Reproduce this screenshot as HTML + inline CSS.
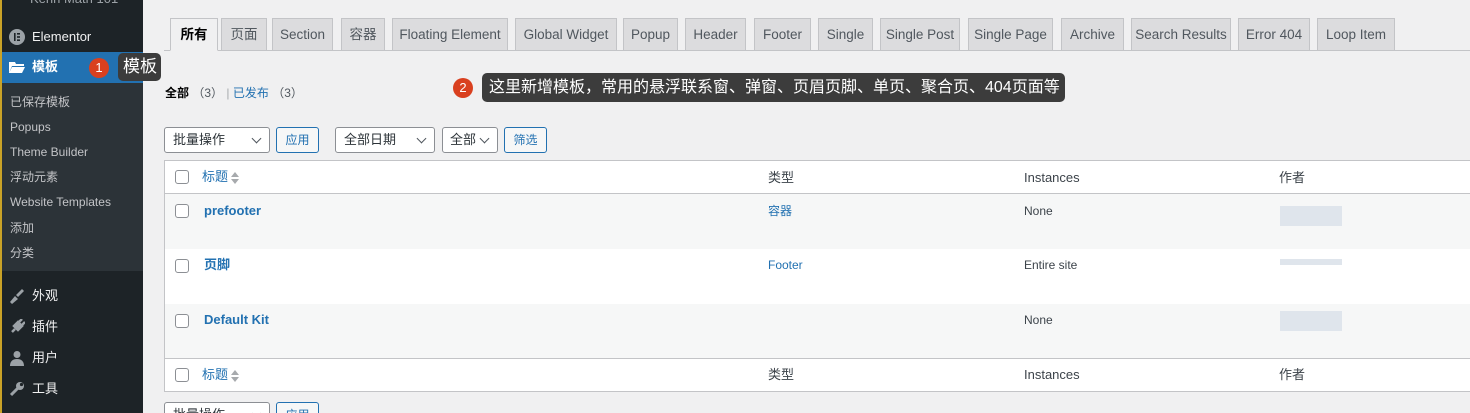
<!DOCTYPE html>
<html><head><meta charset="utf-8"><style>
*{box-sizing:border-box;margin:0;padding:0}
html,body{width:1470px;height:413px;overflow:hidden}
body{background:#f0f0f1;font-family:"Liberation Sans","Noto Sans CJK SC",sans-serif;font-size:13px;color:#3c434a;position:relative}
.sb{position:absolute;left:0;top:0;width:143px;height:413px;background:#1d2327;border-left:2px solid #c9a227}
.sb .it{position:absolute;left:0;width:141px;color:#f0f0f1;font-size:13px;height:30px;line-height:30px;padding-left:30px}
.sb .ic{position:absolute;left:7px;top:7px;width:16px;height:16px}
.sub{position:absolute;left:0;top:83px;width:141px;height:188px;background:#2c3338}
.sub div{position:absolute;left:8px;color:#c3c4c7;font-size:12px;line-height:16px}
.tab{position:absolute;top:18px;height:33px;border:1px solid #c3c4c7;background:#dcdcde;color:#50575e;font-size:13.5px;line-height:32px;text-align:center;white-space:nowrap}
.tab.a{background:#f0f0f1;border-bottom-color:#f0f0f1;color:#000;font-weight:bold}
.line{position:absolute;left:164px;right:0;top:50px;height:1px;background:#c3c4c7}
.sel{position:absolute;top:127px;height:26px;border:1px solid #8c8f94;border-radius:3px;background:#fff;font-size:13px;line-height:24px;padding-left:8px;color:#2c3338}
.sel:after{content:"";position:absolute;right:9px;top:7px;width:6px;height:6px;border-right:1.5px solid #50575e;border-bottom:1.5px solid #50575e;transform:rotate(45deg)}
.btn{position:absolute;top:127px;height:26px;border:1px solid #2271b1;border-radius:3px;background:#f6f7f7;color:#2271b1;font-size:12px;line-height:24px;text-align:center}
.tbl{position:absolute;left:164px;right:0;top:160px;height:232px;border:1px solid #c3c4c7;border-right:none;background:#fff}
.row{position:absolute;left:0;right:0}
.cb{position:absolute;left:10px;width:14px;height:14px;border:1px solid #8c8f94;border-radius:3px;background:#fff}
.t{position:absolute;font-size:13px;line-height:16px;white-space:nowrap}
.blue{color:#2271b1}
.blur{position:absolute;left:1280px;width:62px;height:20px;background:#dfe5ec}
.tip{position:absolute;background:#3c3c3c;color:#fff;border-radius:5px;white-space:nowrap;overflow:hidden}
.badge{position:absolute;width:20px;height:20px;border-radius:50%;background:#d9401f;color:#fff;font-size:13px;text-align:center;line-height:20px}
.arr{display:inline-block;vertical-align:middle;margin-left:3px}
</style></head><body>
<div class="sb">
 <div style="position:absolute;left:28px;top:-9px;color:#9ca2a7;font-size:13px">Kenn Math 101</div>
 <div class="it" style="top:22px"><svg class="ic" viewBox="0 0 16 16"><circle cx="8" cy="8" r="8" fill="#9ca2a7"/><rect x="5" y="4" width="1.6" height="8" fill="#1d2327"/><rect x="8" y="4" width="3" height="1.6" fill="#1d2327"/><rect x="8" y="7.2" width="3" height="1.6" fill="#1d2327"/><rect x="8" y="10.4" width="3" height="1.6" fill="#1d2327"/></svg>Elementor</div>
 <div class="it" style="top:52px;height:31px;background:#2271b1;font-weight:bold;color:#fff"><svg class="ic" viewBox="0 0 16 16"><path d="M0 3h6l1 2h8v2H3L0 14z M3 8h13l-3 6H0z" fill="#fff"/></svg>模板</div>
 <div class="sub">
  <div style="top:11px">已保存模板</div><div style="top:36px">Popups</div><div style="top:61px">Theme Builder</div><div style="top:86px">浮动元素</div><div style="top:111px">Website Templates</div><div style="top:137px">添加</div><div style="top:162px">分类</div>
 </div>
 <div class="it" style="top:281px"><svg class="ic" viewBox="0 0 16 16"><path d="M1 14l5-6 3 3-6 5z M7 7l6-6 2 2-6 6z" fill="#9ca2a7"/></svg>外观</div>
 <div class="it" style="top:312px"><svg class="ic" viewBox="0 0 16 16"><path d="M3 13l3-3M5 7l4 4 4-4-4-4z M10 3l3-3M13 6l3-3" stroke="#9ca2a7" stroke-width="2.5" fill="#9ca2a7"/></svg>插件</div>
 <div class="it" style="top:343px"><svg class="ic" viewBox="0 0 16 16"><circle cx="8" cy="4.5" r="3.5" fill="#9ca2a7"/><path d="M1 16c0-5 3-7 7-7s7 2 7 7z" fill="#9ca2a7"/></svg>用户</div>
 <div class="it" style="top:374px"><svg class="ic" viewBox="0 0 16 16"><path d="M2 14l7-7" stroke="#9ca2a7" stroke-width="3"/><circle cx="11" cy="5" r="4" fill="#9ca2a7"/><circle cx="12.5" cy="3.5" r="1.6" fill="#1d2327"/></svg>工具</div>
</div>
<div class="badge" style="left:89px;top:58px">1</div>
<div class="tip" style="left:118px;top:53px;width:43px;height:28px;font-size:17px;line-height:28px;padding-left:5px">模板</div>
<div class="line"></div>
<div class="tab a" style="left:170px;width:48px">所有</div>
<div class="tab" style="left:221px;width:46px">页面</div>
<div class="tab" style="left:272px;width:61px">Section</div>
<div class="tab" style="left:341px;width:44px">容器</div>
<div class="tab" style="left:392px;width:116px">Floating Element</div>
<div class="tab" style="left:515px;width:102px">Global Widget</div>
<div class="tab" style="left:623px;width:55px">Popup</div>
<div class="tab" style="left:685px;width:61px">Header</div>
<div class="tab" style="left:754px;width:57px">Footer</div>
<div class="tab" style="left:818px;width:55px">Single</div>
<div class="tab" style="left:880px;width:80px">Single Post</div>
<div class="tab" style="left:968px;width:85px">Single Page</div>
<div class="tab" style="left:1061px;width:63px">Archive</div>
<div class="tab" style="left:1131px;width:100px">Search Results</div>
<div class="tab" style="left:1238px;width:72px">Error 404</div>
<div class="tab" style="left:1317px;width:78px">Loop Item</div>
<div class="t" style="left:165px;top:85px;font-size:12px"><b style="color:#000">全部</b> <span style="color:#50575e">（3）</span> <span style="color:#a7aaad">|</span> <span class="blue">已发布</span> <span style="color:#50575e">（3）</span></div>
<div class="badge" style="left:453px;top:78px">2</div>
<div class="tip" style="left:482px;top:73px;width:583px;height:29px;font-size:16px;line-height:29px;padding-left:7px">这里新增模板，常用的悬浮联系窗、弹窗、页眉页脚、单页、聚合页、404页面等</div>
<div class="sel" style="left:164px;width:106px">批量操作</div>
<div class="btn" style="left:276px;width:43px">应用</div>
<div class="sel" style="left:335px;width:100px">全部日期</div>
<div class="sel" style="left:442px;width:56px;padding-left:7px">全部</div>
<div class="btn" style="left:504px;width:43px">筛选</div>
<div class="tbl">
 <div class="row" style="top:0;height:33px;border-bottom:1px solid #c3c4c7"><div class="cb" style="top:9px"></div><div class="t blue" style="left:37px;top:8px">标题<svg class="arr" width="8" height="14" viewBox="0 0 8 14"><path d="M0 6L4 1 8 6z M0 8L4 13 8 8z" fill="#a7aaad"/></svg></div><div class="t" style="left:603px;top:9px">类型</div><div class="t" style="left:859px;top:9px">Instances</div><div class="t" style="left:1114px;top:9px">作者</div></div>
 <div class="row" style="top:33px;height:55px;background:#f6f7f7"><div class="cb" style="top:10px"></div><div class="t blue" style="left:39px;top:9px;font-weight:bold">prefooter</div><div class="t blue" style="left:603px;top:9px;font-size:12px">容器</div><div class="t" style="left:859px;top:9px;font-size:12px">None</div></div>
 <div class="row" style="top:88px;height:55px"><div class="cb" style="top:10px"></div><div class="t blue" style="left:39px;top:8px;font-weight:bold">页脚</div><div class="t blue" style="left:603px;top:8px;font-size:12px">Footer</div><div class="t" style="left:859px;top:8px;font-size:12px">Entire site</div></div>
 <div class="row" style="top:143px;height:55px;background:#f6f7f7;border-bottom:1px solid #c3c4c7"><div class="cb" style="top:10px"></div><div class="t blue" style="left:39px;top:8px;font-weight:bold">Default Kit</div><div class="t" style="left:859px;top:8px;font-size:12px">None</div></div>
 <div class="row" style="top:198px;height:33px"><div class="cb" style="top:9px"></div><div class="t blue" style="left:37px;top:8px">标题<svg class="arr" width="8" height="14" viewBox="0 0 8 14"><path d="M0 6L4 1 8 6z M0 8L4 13 8 8z" fill="#a7aaad"/></svg></div><div class="t" style="left:603px;top:8px">类型</div><div class="t" style="left:859px;top:8px">Instances</div><div class="t" style="left:1114px;top:8px">作者</div></div>
</div>
<div class="blur" style="top:206px"></div>
<div class="blur" style="top:259px;height:6px"></div>
<div class="blur" style="top:311px"></div>
<div class="sel" style="left:164px;width:106px;top:402px">批量操作</div>
<div class="btn" style="left:276px;width:43px;top:402px">应用</div>
</body></html>
